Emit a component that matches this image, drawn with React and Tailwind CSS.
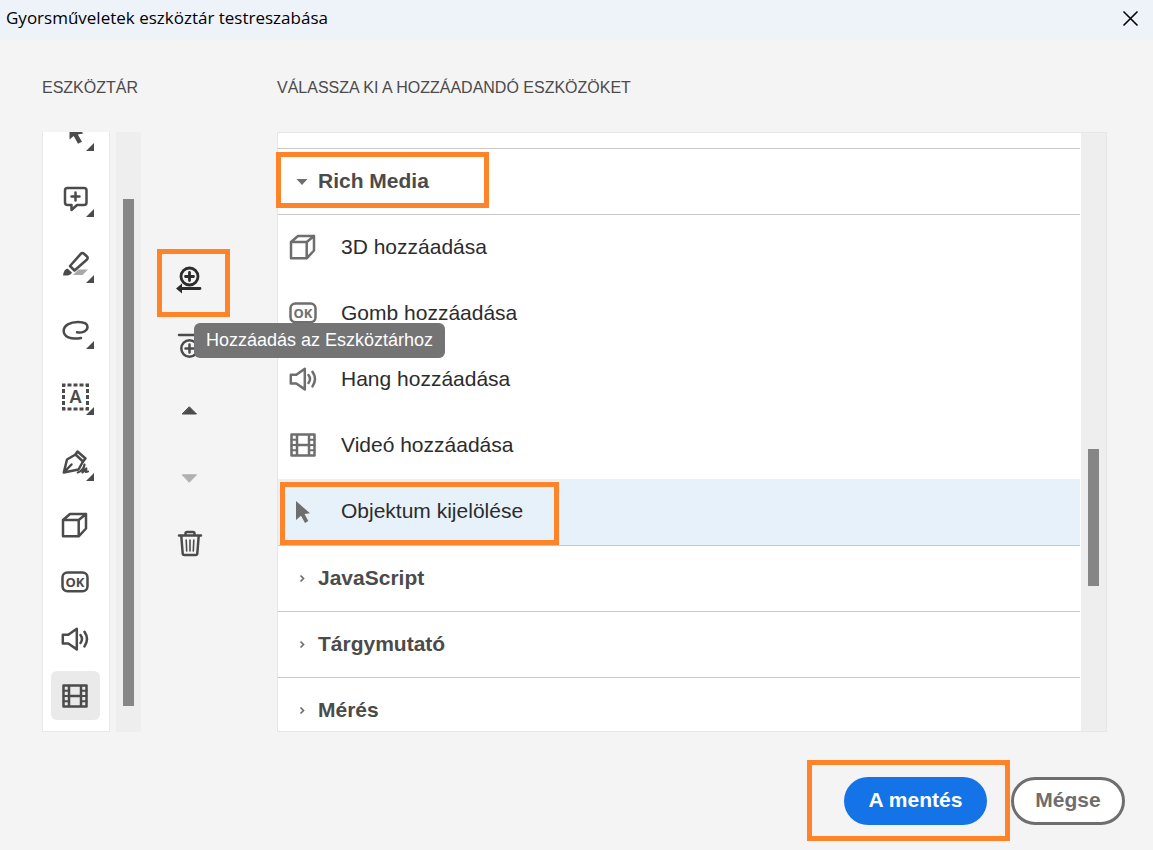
import React from "react";

const iconProps = {
  width: 28,
  height: 28,
  viewBox: "0 0 28 28",
  fill: "none",
  stroke: "currentColor",
  strokeWidth: 2.5,
  strokeLinejoin: "round",
  strokeLinecap: "round",
  "aria-hidden": true,
  className: "block shrink-0",
};

const Svg = ({ children }) => <svg {...iconProps}>{children}</svg>;

const CubeIcon = () => (
  <Svg>
    <path d="M2 9h15.700v16.300H2zM2 9L9 3h16v14.500l-7.300 7.800M17.700 9L25 3" />
  </Svg>
);

const OkIcon = () => (
  <Svg>
    <rect x="1.500" y="4.500" width="25" height="18.800" rx="5" />
    <text x="14" y="18.500" textAnchor="middle" fill="currentColor" stroke="none" fontFamily="Noto Sans, sans-serif" fontWeight="700" fontSize="13">OK</text>
  </Svg>
);

const SpeakerIcon = () => (
  <Svg>
    <path d="M1.800 9.700H7.300L15.800 3.800V24.400L7.300 18.500H1.800zM19.500 10q3 4 0 8M23.500 6.800q5 7.300 0 14.600" />
  </Svg>
);

const FilmIcon = () => (
  <Svg>
    <path d="M2.500 3.500h23v21h-23zM8 3.500v21M20 3.500v21M8 14h12" />
    <path strokeWidth="2" d="M2.500 8.700H8M2.500 14H8M2.500 19.300H8M20 8.700h5.500M20 14h5.500M20 19.300h5.500" />
  </Svg>
);

const CursorIcon = () => (
  <Svg>
    <path fill="currentColor" stroke="none" d="M7 4L21 16.300L15.500 17L19.300 24L16 26L12 18.800L7 23z" />
  </Svg>
);

const PointerIcon = () => (
  <Svg>
    <path fill="currentColor" stroke="none" d="M8.500 -1V20.500L12.700 17L17 24.700L21 22.700L16.800 15.500L22.300 14.500z" />
  </Svg>
);

const CommentIcon = () => (
  <Svg>
    <path d="M6 3H23a2.500 2.500 0 0 1 2.500 2.500V17.500a2.500 2.500 0 0 1-2.500 2.500H16L10.500 25V20H6.500a2.500 2.500 0 0 1-2.500-2.500V5.500A2.500 2.500 0 0 1 6.500 3zM14.500 7.500v8M10.500 11.500h8" />
  </Svg>
);

const HighlighterIcon = () => (
  <Svg>
    <path fill="#a8a8a8" stroke="none" d="M17.500 18.500H27L21.500 24H12z" />
    <path d="M9 15L19.800 2.800a2.200 2.200 0 0 1 3.200 0L26 5.500a2 2 0 0 1 0 3L13.500 19.500z" />
    <path fill="currentColor" stroke="none" d="M2 24.500Q3 18 6.500 17.500L11 21.500Q9.500 24.500 6 24.500z" />
  </Svg>
);

const LassoIcon = () => (
  <Svg>
    <path d="M20 21C9.500 23 2.700 19.700 2.700 14C2.700 8.300 9 5 17 5C23 5 26.500 7 26.500 10C26.500 14 21 16.300 16 15.300" />
  </Svg>
);

const TextBoxIcon = () => (
  <Svg>
    <rect x="2.500" y="2" width="24" height="24" strokeWidth="3" strokeDasharray="4 2" strokeDashoffset="2" strokeLinecap="butt" strokeLinejoin="miter" />
    <text x="14.500" y="20" textAnchor="middle" fill="currentColor" stroke="none" fontFamily="Noto Sans, sans-serif" fontWeight="600" fontSize="18">A</text>
  </Svg>
);

const PenIcon = () => (
  <Svg>
    <path d="M2.800 23.500L6 10.500L14.500 5.500L22 12.500L17.500 20.500L2.800 23.500L10.500 15.500" />
    <path d="M14.500 5.500L16.500 2.500L24.500 9.500L22 12.500" />
    <path strokeWidth="2.200" d="M16.800 23.500C20.500 22.500 23.500 18 23.500 15.500M23.500 15.500L21.500 23.500L25.300 19.500L24.800 23L27 22.500" />
  </Svg>
);

const AddToToolbarIcon = () => (
  <Svg>
    <circle cx="13.500" cy="10.500" r="8.500" strokeWidth="2.800" />
    <path strokeWidth="2.800" d="M13.500 6.500v8M9.500 10.500h8M5 22.500H24" />
    <path fill="currentColor" stroke="none" d="M0 22.500L6 17.500V27.500z" />
  </Svg>
);

const AddDividerIcon = () => (
  <Svg>
    <path d="M3 3H25M13.500 12.500v8M9.500 16.500h8" />
    <circle cx="13.500" cy="16.500" r="8.200" />
  </Svg>
);

const UpIcon = () => (
  <Svg>
    <path fill="currentColor" strokeWidth="1" d="M13.500 9L20.500 16H6.500z" />
  </Svg>
);

const DownIcon = () => (
  <Svg>
    <path fill="currentColor" strokeWidth="1" d="M13.500 18L20.500 10.800H6.500z" />
  </Svg>
);

const TrashIcon = () => (
  <Svg>
    <path d="M3 5.500H25M9.500 5V3.500q0-1.500 1.500-1.500h6q1.500 0 1.500 1.500V5M5.300 6L6.700 23.500q.1 1.500 1.600 1.500H19.700q1.500 0 1.600-1.500L22.700 6" />
    <path strokeWidth="1.600" d="M10.200 10l.5 11M14 10v11M17.800 10l-.5 11" />
  </Svg>
);

const toolbarItems = [
  { label: "Kijelölés", Icon: PointerIcon, menu: true },
  { label: "Megjegyzés", Icon: CommentIcon, menu: true },
  { label: "Kiemelés", Icon: HighlighterIcon, menu: true },
  { label: "Rajzolás", Icon: LassoIcon, menu: true },
  { label: "Szöveg", Icon: TextBoxIcon, menu: true },
  { label: "Aláírás", Icon: PenIcon, menu: true },
  { label: "3D", Icon: CubeIcon },
  { label: "Gomb", Icon: OkIcon },
  { label: "Hang", Icon: SpeakerIcon },
  { label: "Videó", Icon: FilmIcon, selected: true },
];

const richMedia = [
  { label: "3D hozzáadása", Icon: CubeIcon },
  { label: "Gomb hozzáadása", Icon: OkIcon },
  { label: "Hang hozzáadása", Icon: SpeakerIcon },
  { label: "Videó hozzáadása", Icon: FilmIcon },
  { label: "Objektum kijelölése", Icon: CursorIcon, selected: true },
];

const Frame = ({ className }) => (
  <span className={"pointer-events-none absolute border-[5px] border-[#ff8429] " + className} />
);

const ToolbarItem = ({ label, Icon, menu, selected }) => (
  <button
    type="button"
    aria-label={label}
    className={
      "relative flex w-[49px] shrink-0 items-center justify-center rounded-md " +
      (menu ? "h-[58px] " : "h-[49px] ") +
      (selected ? "bg-[#eaeaea]" : "")
    }
  >
    <Icon />
    {menu && (
      <svg width="8" height="8" viewBox="0 0 8 8" aria-hidden className="absolute bottom-[11px] right-[6px]">
        <path d="M8 0V8H0z" fill="currentColor" />
      </svg>
    )}
  </button>
);

const GroupHeader = ({ label, open, children }) => (
  <h3 className="relative h-[66px] border-b border-[#c8c8c8]">
    <button type="button" aria-expanded={!!open} className="flex h-full w-full items-center gap-2.5 pb-0.5 pl-[18px] text-left text-[21px] font-bold">
      <svg width="12" height="12" viewBox="0 0 12 12" fill="none" aria-hidden>
        {open ? (
          <path d="M0.500 4H11.500L6 10z" fill="#6e6e6e" />
        ) : (
          <path d="M4.500 3.500L7.500 6.500L4.500 9.500" stroke="#6e6e6e" strokeWidth="1.700" />
        )}
      </svg>
      {label}
    </button>
    {children}
  </h3>
);

export default function App() {
  return (
    <div role="dialog" aria-labelledby="title" className="flex h-screen flex-col bg-[#f4f4f4] text-[#4b4b4b] [font-family:'Liberation_Sans',Arial,sans-serif]">
      <header className="flex h-10 shrink-0 items-center justify-between bg-[#eef3fa] pl-1.5 pr-3.5 text-black">
        <h1 id="title" className="pb-1 text-[17px] leading-6 [font-family:'Open_Sans','Noto_Sans',sans-serif]">
          Gyorsműveletek eszköztár testreszabása
        </h1>
        <button type="button" aria-label="Bezárás" className="pb-1">
          <svg width="17" height="17" viewBox="0 0 17 17" fill="none" stroke="currentColor" strokeWidth="1.600" aria-hidden>
            <path d="M1.500 1.500L15.500 15.500M15.500 1.500L1.500 15.500" />
          </svg>
        </button>
      </header>

      <main className="flex min-h-0 flex-1 pl-[42px] pr-[46px] pt-9">
        <section className="flex w-[235px] shrink-0 flex-col gap-8">
          <h2 className="text-[16px] leading-6">ESZKÖZTÁR</h2>
          <div className="flex min-h-0 flex-1">
            <div className="flex w-[68px] flex-col items-center justify-end gap-2 overflow-hidden border border-t-0 border-[#e8e8e8] bg-white pb-[11px] pr-0.5">
              {toolbarItems.map((item) => (
                <ToolbarItem key={item.label} {...item} />
              ))}
            </div>
            <div className="ml-1.5 flex w-[25px] justify-center bg-[#eeeeee] pb-[26px] pt-[67px]">
              <div className="w-[11px] bg-[#868686]" />
            </div>
            <div className="ml-4 flex flex-col pt-[115px]">
              <div className="relative z-10">
                <button type="button" aria-describedby="tip" aria-label="Hozzáadás az Eszköztárhoz" className="flex h-[66px] w-[66px] items-center justify-center text-[#2c2c2c]">
                  <AddToToolbarIcon />
                </button>
                <Frame className="left-0 top-0.5 h-[68px] w-[73px]" />
                <div id="tip" role="tooltip" className="absolute left-[37px] top-[76px] whitespace-nowrap rounded-md bg-[#747474] px-3 text-[18px] leading-[35px] text-white">
                  Hozzáadás az Eszköztárhoz
                </div>
              </div>
              <button type="button" aria-label="Elválasztó hozzáadása" className="flex h-[66px] w-[66px] items-center justify-center">
                <AddDividerIcon />
              </button>
              <button type="button" aria-label="Mozgatás felfelé" className="flex h-[66px] w-[66px] items-center justify-center">
                <UpIcon />
              </button>
              <button type="button" aria-label="Mozgatás lefelé" disabled className="flex h-[66px] w-[66px] items-center justify-center text-[#b0b0b0]">
                <DownIcon />
              </button>
              <button type="button" aria-label="Törlés" className="flex h-[66px] w-[66px] items-center justify-center">
                <TrashIcon />
              </button>
            </div>
          </div>
        </section>

        <section className="flex min-w-0 flex-1 flex-col gap-8">
          <h2 className="text-[16px] leading-6">VÁLASSZA KI A HOZZÁADANDÓ ESZKÖZÖKET</h2>
          <div className="flex min-h-0 flex-1 border border-[#e6e6e6] bg-white">
            <div className="min-w-0 flex-1 overflow-y-clip pr-px">
              <div className="h-4 border-b border-[#c8c8c8]" />
              <GroupHeader label="Rich Media" open>
                <Frame className="-left-0.5 top-[3px] h-[56px] w-[213px]" />
              </GroupHeader>
              <ul className="border-b border-[#c8c8c8]">
                {richMedia.map(({ label, Icon, selected }) => (
                  <li key={label} className={"relative h-[66px] " + (selected ? "bg-[#e7f1fa]" : "")}>
                    <button type="button" className="flex h-full w-full items-center gap-6 pb-0.5 pl-[11px] text-left text-[21px] text-[#2c2c2c]">
                      <span className="text-[#6e6e6e]">
                        <Icon />
                      </span>
                      {label}
                    </button>
                    {selected && <Frame className="left-0.5 top-[3px] h-[63px] w-[279px]" />}
                  </li>
                ))}
              </ul>
              <GroupHeader label="JavaScript" />
              <GroupHeader label="Tárgymutató" />
              <GroupHeader label="Mérés" />
            </div>
            <div className="flex w-[25px] justify-center bg-[#eeeeee] pt-[316px]">
              <div className="h-[137px] w-[11px] bg-[#868686]" />
            </div>
          </div>
        </section>
      </main>

      <footer className="flex shrink-0 justify-end gap-6 pb-[25px] pr-7 pt-[45px] text-[21px] font-bold">
        <div className="relative">
          <button type="button" className="h-12 min-w-[143px] rounded-full bg-[#1473e6] px-5 pb-0.5 text-white">
            A mentés
          </button>
          <Frame className="-left-[37px] -top-[17px] h-[81px] w-[203px]" />
        </div>
        <button type="button" className="h-12 min-w-[114px] rounded-full border-[3px] border-[#6e6e6e] bg-white px-5 pb-0.5 text-[#6e6e6e]">
          Mégse
        </button>
      </footer>
    </div>
  );
}
